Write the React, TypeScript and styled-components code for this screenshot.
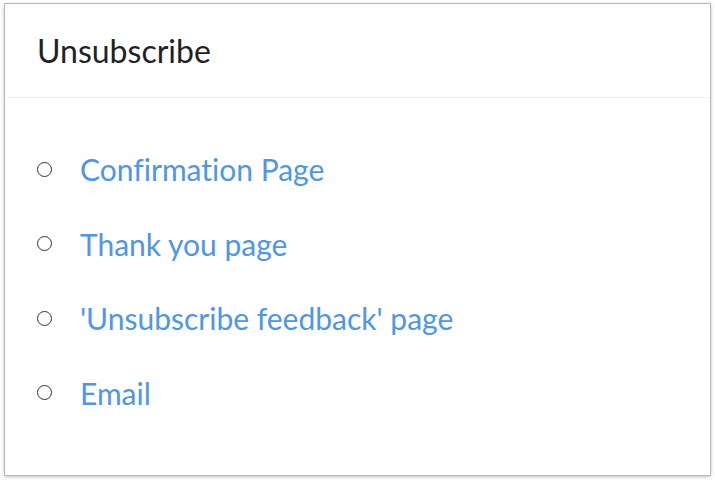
import React from 'react';
import styled, {createGlobalStyle} from 'styled-components';

const GlobalStyle = createGlobalStyle`
  html, body {
    margin: 0;
    padding: 0;
    background: #ffffff;
  }
  body {
    font-family: Lato, "Liberation Sans", sans-serif;
  }
`;

const items = ['Confirmation Page', 'Thank you page', "'Unsubscribe feedback' page", 'Email'];

const App = () => {
  return (
    <>
      <GlobalStyle />
      <Page>
        <Card>
          <Header>
            <Title>Unsubscribe</Title>
          </Header>
          <List>
            {items.map((label) => (
              <Row key={label}>
                <Radio />
                <Link href="#">{label}</Link>
              </Row>
            ))}
          </List>
        </Card>
      </Page>
    </>
  );
};

export default App;

const Page = styled.div`
  width: 715px;
  height: 480px;
  padding: 4px 5px 5px 5px;
  box-sizing: border-box;
`;

const Card = styled.div`
  width: 100%;
  height: 100%;
  background: #ffffff;
  box-shadow: 0 0 0 1px #b8b8b8, 0 1px 4px rgba(0, 0, 0, 0.4);
  display: flex;
  flex-direction: column;
`;

const Header = styled.div`
  height: 94px;
  box-sizing: border-box;
  display: flex;
  align-items: center;
  padding: 0 0 0 30px;
  border-bottom: 1px solid #eef1f4;
  margin-left: 2px;
`;

const Title = styled.h2`
  margin: 0;
  font-family: Lato, "Liberation Sans", sans-serif;
  font-size: 32px;
  font-weight: 400;
  color: #222222;
  font-variant-ligatures: none;
`;

const List = styled.ul`
  list-style: none;
  margin: 0;
  padding: 53px 0 0 32px;
  display: flex;
  flex-direction: column;
  gap: 38.5px;
`;

const Row = styled.li`
  display: flex;
  align-items: center;
  height: 36px;
`;

const Radio = styled.span`
  width: 15px;
  height: 15px;
  border: 1px solid #333333;
  border-radius: 50%;
  box-sizing: border-box;
  flex-shrink: 0;
  margin-right: 28px;
`;

const Link = styled.a`
  font-family: Lato, "Liberation Sans", sans-serif;
  font-size: 30px;
  color: #4f96e6;
  text-decoration: none;
  font-variant-ligatures: none;
`;
